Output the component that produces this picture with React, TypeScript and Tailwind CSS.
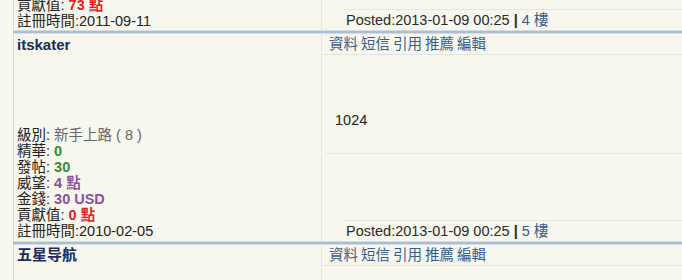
import React from "react";

const FONT = {
  fontFamily: '"Liberation Sans", "Noto Sans CJK TC", sans-serif',
};

function Separator() {
  return <div className="h-[4px] ml-[13px] border-y border-y-[#d3dee8] bg-[#abbed1]" />;
}

function Links() {
  return (
    <div className="h-[21px] pl-[7px] border-b border-b-[#dfe7e6] text-[#3b5b8e] leading-[20px] flex gap-[3px]">
      <span>資料</span>
      <span>短信</span>
      <span>引用</span>
      <span>推薦</span>
      <span>編輯</span>
    </div>
  );
}

function Posted({ floor }: { floor: string }) {
  return (
    <div className="ml-[22px] h-[21px] border-t border-t-[#dfe7e6] pl-[2px] leading-[20px] text-[#2a2a2a]">
      Posted:2013-01-09 00:25 <b className="font-bold">|</b>{" "}
      <span className="text-[#3b5b8e]">{floor} 樓</span>
    </div>
  );
}

export default function App() {
  return (
    <div
      className="w-[682px] h-[280px] overflow-hidden bg-[#f7f7ed] text-[14.5px] text-[#222]"
      style={FONT}
    >
      {/* Row A (cut) */}
      <div className="flex h-[30px] ml-[13px]">
        <div className="w-[308px] border-l border-l-[#cfdbe4] pl-[3px] pb-[1px] flex flex-col justify-end leading-[16px] overflow-hidden">
          <div>
            貢獻值: <b className="text-[#e31d1d]">73 點</b>
          </div>
          <div>註冊時間:2011-09-11</div>
        </div>
        <div className="flex-1 border-l border-l-[#dfe7e6] flex flex-col justify-end">
          <Posted floor="4" />
        </div>
      </div>
      <Separator />

      {/* Row B */}
      <div className="flex h-[207px] ml-[13px]">
        <div className="w-[308px] border-l border-l-[#cfdbe4] pl-[3px] pt-[3px] pb-[2px] flex flex-col justify-between leading-[16px]">
          <div className="font-bold text-[15px] text-[#1c2a5e]">itskater</div>
          <div>
            <div>
              級別: <span className="text-[#666]">新手上路 ( 8 )</span>
            </div>
            <div>
              精華: <b className="text-[#3a8a35]">0</b>
            </div>
            <div>
              發帖: <b className="text-[#3a8a35]">30</b>
            </div>
            <div>
              威望: <b className="text-[#8a52a0]">4 點</b>
            </div>
            <div>
              金錢: <b className="text-[#8a52a0]">30 USD</b>
            </div>
            <div>
              貢獻值: <b className="text-[#e31d1d]">0 點</b>
            </div>
            <div>註冊時間:2010-02-05</div>
          </div>
        </div>
        <div className="flex-1 border-l border-l-[#dfe7e6] flex flex-col">
          <Links />
          <div className="h-[98px] pl-[13px] pt-[57px] leading-[16px] text-[#222]">1024</div>
          <div className="ml-[4px] border-t border-t-[#dfe7e6] flex-1" />
          <Posted floor="5" />
        </div>
      </div>
      <Separator />

      {/* Row C */}
      <div className="flex h-[40px] ml-[13px]">
        <div className="w-[308px] border-l border-l-[#cfdbe4] pl-[3px] pt-[2px] leading-[16px]">
          <div className="font-bold text-[15px] text-[#1c2a5e]">五星导航</div>
        </div>
        <div className="flex-1 border-l border-l-[#dfe7e6]">
          <Links />
        </div>
      </div>
    </div>
  );
}
